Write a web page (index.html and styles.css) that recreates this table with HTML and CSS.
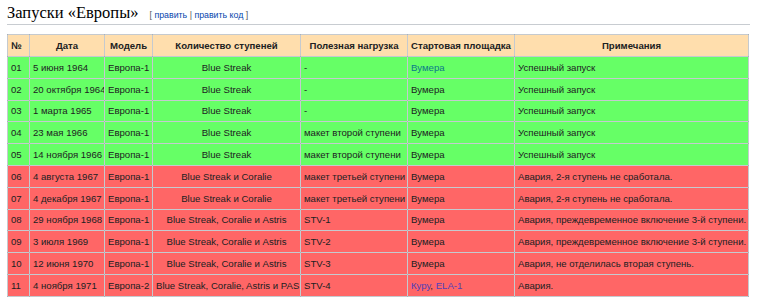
FILE: index.html
```html
<!DOCTYPE html>
<html lang="ru">
<head>
<meta charset="utf-8">
<link rel="stylesheet" href="styles.css">
</head>
<body>
<h2 class="heading"><span class="title">Запуски «Европы»</span><span class="edit">[ <a href="#">править</a> | <a href="#">править код</a> ]</span></h2>
<table class="wikitable">
<colgroup>
<col class="c-num"><col class="c-date"><col class="c-model"><col class="c-stages"><col class="c-load"><col class="c-pad"><col class="c-note">
</colgroup>
<thead>
<tr><th>№</th><th>Дата</th><th>Модель</th><th>Количество ступеней</th><th>Полезная нагрузка</th><th>Стартовая площадка</th><th>Примечания</th></tr>
</thead>
<tbody>
<tr class="ok"><td>01</td><td>5 июня 1964</td><td>Европа-1</td><td class="ctr">Blue Streak</td><td>-</td><td><a href="#" class="lnk">Вумера</a></td><td>Успешный запуск</td></tr>
<tr class="ok"><td>02</td><td>20 октября 1964</td><td>Европа-1</td><td class="ctr">Blue Streak</td><td>-</td><td>Вумера</td><td>Успешный запуск</td></tr>
<tr class="ok"><td>03</td><td>1 марта 1965</td><td>Европа-1</td><td class="ctr">Blue Streak</td><td>-</td><td>Вумера</td><td>Успешный запуск</td></tr>
<tr class="ok"><td>04</td><td>23 мая 1966</td><td>Европа-1</td><td class="ctr">Blue Streak</td><td>макет второй ступени</td><td>Вумера</td><td>Успешный запуск</td></tr>
<tr class="ok"><td>05</td><td>14 ноября 1966</td><td>Европа-1</td><td class="ctr">Blue Streak</td><td>макет второй ступени</td><td>Вумера</td><td>Успешный запуск</td></tr>
<tr class="fail"><td>06</td><td>4 августа 1967</td><td>Европа-1</td><td class="ctr">Blue Streak и Coralie</td><td>макет третьей ступени</td><td>Вумера</td><td>Авария, 2-я ступень не сработала.</td></tr>
<tr class="fail"><td>07</td><td>4 декабря 1967</td><td>Европа-1</td><td class="ctr">Blue Streak и Coralie</td><td>макет третьей ступени</td><td>Вумера</td><td>Авария, 2-я ступень не сработала.</td></tr>
<tr class="fail"><td>08</td><td>29 ноября 1968</td><td>Европа-1</td><td class="ctr">Blue Streak, Coralie и Astris</td><td>STV-1</td><td>Вумера</td><td>Авария, преждевременное включение 3-й ступени.</td></tr>
<tr class="fail"><td>09</td><td>3 июля 1969</td><td>Европа-1</td><td class="ctr">Blue Streak, Coralie и Astris</td><td>STV-2</td><td>Вумера</td><td>Авария, преждевременное включение 3-й ступени.</td></tr>
<tr class="fail"><td>10</td><td>12 июня 1970</td><td>Европа-1</td><td class="ctr">Blue Streak, Coralie и Astris</td><td>STV-3</td><td>Вумера</td><td>Авария, не отделилась вторая ступень.</td></tr>
<tr class="fail"><td>11</td><td>4 ноября 1971</td><td>Европа-2</td><td class="ctr">Blue Streak, Coralie, Astris и PAS</td><td>STV-4</td><td><a href="#" class="lnk2">Куру</a>, <a href="#" class="lnk2">ELA-1</a></td><td>Авария.</td></tr>
</tbody>
</table>
</body>
</html>
```
FILE: styles.css
```css
html, body {
  margin: 0;
  padding: 0;
  background: #ffffff;
}
body {
  padding: 3px 8px 0 7px;
  font-family: "Liberation Sans", Arial, sans-serif;
  color: #202122;
}
.heading {
  margin: 0 0 9px 0;
  padding: 0;
  border-bottom: 1px solid #c8ccd1;
  font-weight: normal;
  display: flex;
  align-items: baseline;
  gap: 11px;
  height: 21px;
}
.title {
  font-family: "Liberation Serif", "Times New Roman", serif;
  font-size: 16.5px;
  color: #000;
}
.edit {
  font-family: "Liberation Sans", Arial, sans-serif;
  font-size: 8.8px;
  color: #54595d;
}
.edit a {
  color: #0645ad;
  text-decoration: none;
}
.wikitable {
  border-collapse: collapse;
  table-layout: fixed;
  width: 741px;
  font-size: 9.6px;
  border: 1px solid #b8bcc2;
}
.wikitable th,
.wikitable td {
  border: 1px solid rgba(150, 158, 168, 0.55);
  padding: 0 3px;
  height: 20.8px;
  white-space: nowrap;
  overflow: hidden;
  text-align: left;
}
.wikitable th {
  background: #ffdead;
  font-weight: bold;
  text-align: center;
  height: 21px;
  color: #202122;
}
.wikitable th:first-child {
  text-align: left;
}
.c-num { width: 22px; }
.c-date { width: 75px; }
.c-model { width: 48px; }
.c-stages { width: 148px; }
.c-load { width: 107px; }
.c-pad { width: 107px; }
.c-note { width: 234px; }
.ok td { background: #66ff66; }
.fail td { background: #ff6666; }
.wikitable td.ctr { text-align: center; }
.lnk {
  color: #0b7a8a;
  text-decoration: none;
}
.lnk2 {
  color: #5340b8;
  text-decoration: none;
}
```
